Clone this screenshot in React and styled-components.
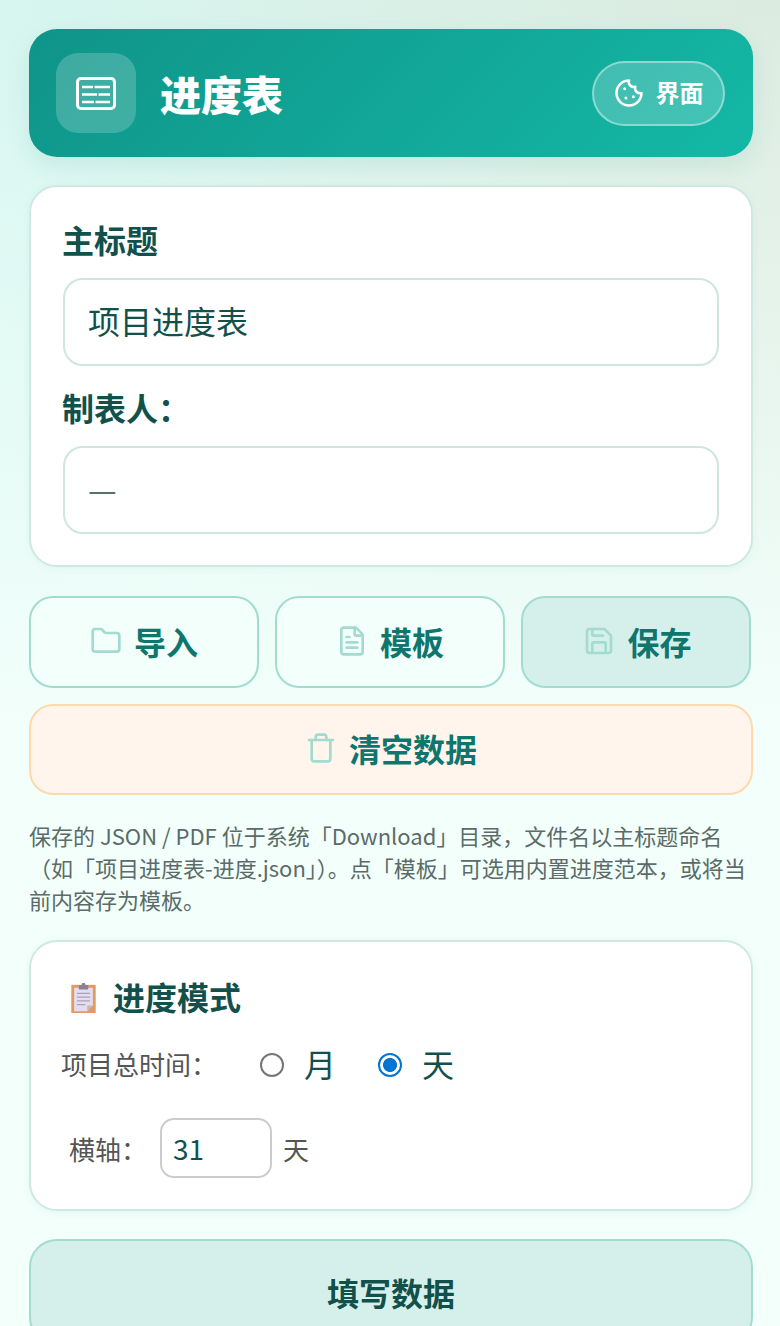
import styled, { createGlobalStyle } from "styled-components";
import { Folder, FileText, Save, Trash } from "lucide-react";

const GlobalStyle = createGlobalStyle`
  html, body {
    margin: 0;
    height: 1326px;
    overflow: hidden;
  }
  body {
    font-family: "Noto Sans CJK SC", "Noto Sans", sans-serif;
    color: #12504b;
  }
  * {
    box-sizing: border-box;
  }
`;

const Page = styled.div`
  height: 1326px;
  padding: 29px 27px 0 29px;
  overflow: hidden;
  background: linear-gradient(180deg, rgba(242, 255, 251, 0) 0, #f2fffb 720px),
    linear-gradient(90deg, #d6f6ef, #dcebe0);
`;

const Header = styled.header`
  height: 128px;
  padding: 0 28px 0 27px;
  display: flex;
  align-items: center;
  border-radius: 28px;
  background: linear-gradient(135deg, #0f9488 0%, #14b8a6 100%);
  box-shadow: 0 8px 24px rgba(15, 148, 136, 0.12);
`;

const LogoBox = styled.div`
  width: 80px;
  height: 80px;
  margin-right: 24px;
  display: flex;
  align-items: center;
  justify-content: center;
  border-radius: 22px;
  background: rgba(255, 255, 255, 0.2);
`;

const HeaderTitle = styled.h1`
  flex: 1;
  margin: 0;
  font-size: 41px;
  line-height: 48px;
  font-weight: 900;
  color: #fff;
`;

const ThemeButton = styled.button`
  width: 133px;
  height: 65px;
  padding: 0;
  display: flex;
  align-items: center;
  justify-content: center;
  gap: 12px;
  border: 2px solid rgba(255, 255, 255, 0.4);
  border-radius: 33px;
  background: rgba(255, 255, 255, 0.2);
  color: #fff;
  font: 700 24px "Noto Sans CJK SC", sans-serif;
`;

const ThemeLabel = styled.span`
  margin-bottom: 4px;
`;

const Card = styled.section`
  margin-top: 28px;
  padding: 29px 32px 31px;
  border: 2px solid #cfe9e2;
  border-radius: 28px;
  background: #fff;
  box-shadow: 0 2px 8px rgba(15, 148, 136, 0.06);
`;

const FieldLabel = styled.label`
  display: block;
  margin: 0 0 16px -1px;
  font-size: 32px;
  line-height: 46px;
  font-weight: 700;
  color: #12504b;
`;

const TextInput = styled.input`
  display: block;
  width: 100%;
  height: 88px;
  margin-bottom: 18px;
  padding: 0 23px 4px;
  border: 2px solid #cfe6e0;
  border-radius: 20px;
  background: #fff;
  color: #12504b;
  font: 400 32px "Noto Sans CJK SC", sans-serif;
  outline: none;

  &:last-child {
    margin-bottom: 0;
  }

  &::placeholder {
    color: #5c6f6b;
    opacity: 1;
  }
`;

const ActionRow = styled.div`
  margin-top: 29px;
  display: grid;
  grid-template-columns: repeat(3, 230px);
  gap: 16px;
`;

const ActionButton = styled.button`
  height: 92px;
  padding: 0 0 3px ${(p) => (p.$filled ? "3px" : "0")};
  display: flex;
  align-items: center;
  justify-content: center;
  gap: 12px;
  border: 2px solid #a3dccf;
  border-radius: 24px;
  background: ${(p) => (p.$filled ? "#d5f0ea" : "#f2fffb")};
  color: #0f766e;
  font: 700 32px "Noto Sans CJK SC", sans-serif;

  svg {
    color: #a3dccf;
  }
`;

const ClearButton = styled(ActionButton)`
  width: 100%;
  height: 91px;
  margin-top: 16px;
  border-color: #fdd9ac;
  background: #fff5ec;
`;

const Note = styled.p`
  margin: 24px 0 0;
  font-size: 22px;
  line-height: 32px;
  color: #5a6b68;
`;

const ModeCard = styled(Card)`
  margin-top: 25px;
  height: 271px;
  padding: 0 30px;
`;

const ModeTitle = styled.h2`
  margin: 0;
  padding-top: 28px;
  height: 95px;
  display: flex;
  align-items: flex-start;
  gap: 17px;
  font-size: 32px;
  line-height: 52px;
  font-weight: 700;
  color: #12504b;

  svg {
    margin: 13px 0 0 10px;
  }
`;

const RadioRow = styled.div`
  height: 52px;
  display: flex;
  align-items: center;
  font-size: 26px;
  color: #555;
`;

const RowLabel = styled.span`
  width: 199px;
  flex: none;
`;

const RadioOption = styled.label`
  margin-right: 42px;
  display: flex;
  align-items: center;
  gap: 20px;
  font-size: 32px;
  color: #12504b;
`;

const RadioInput = styled.input`
  appearance: none;
  width: 24px;
  height: 24px;
  margin: 4px 0 0;
  border: 2px solid #767676;
  border-radius: 50%;
  background: #fff;

  &:checked {
    border-color: #0075d4;
    background: radial-gradient(circle, #0075d4 0, #0075d4 6.6px, #fff 7.4px);
  }
`;

const AxisRow = styled.div`
  margin-top: 29px;
  padding-left: 8px;
  display: flex;
  align-items: center;
  font-size: 26px;
  color: #555;
`;

const AxisLabel = styled.span`
  width: 91px;
  flex: none;
  font-size: 26px;
`;

const AxisInput = styled.input`
  width: 112px;
  height: 60px;
  margin-right: 11px;
  padding: 0 11px;
  border: 2px solid #ccc;
  border-radius: 14px;
  color: #12504b;
  font: 400 28px "Noto Sans CJK SC", sans-serif;
  outline: none;
`;

const FillButton = styled.button`
  display: block;
  width: 100%;
  height: 106px;
  margin-top: 28px;
  padding: 0;
  border: 2px solid #a3dccf;
  border-radius: 28px;
  background: #d5f0ea;
  color: #12504b;
  font: 700 32px "Noto Sans CJK SC", sans-serif;
`;

const GanttIcon = () => (
  <svg width="40" height="33" viewBox="0 0 40 33" fill="none" stroke="#fff">
    <rect x="1.5" y="1.5" width="37" height="30" rx="3.5" strokeWidth="3" />
    <path d="M6 10h11M18.5 10h15.5M6 17.5h15M22.5 17.5h11.5M6 25h12M19.5 25h14.5" strokeWidth="2.6" />
  </svg>
);

const CookieIcon = () => (
  <svg width="30" height="30" viewBox="0 0 24 24" fill="none" stroke="#fff" strokeWidth="2" strokeLinecap="round" strokeLinejoin="round">
    <path d="M12 2a10 10 0 1 0 10 10 4 4 0 0 1-5-5 4 4 0 0 1-5-5" />
    <path d="M8.5 8.5v.01M15.5 15v.01M9.5 16v.01" strokeWidth="2.4" />
  </svg>
);

const ClipboardIcon = () => (
  <svg width="25" height="30" viewBox="0 0 26 32">
    <rect y="2" width="26" height="30" fill="#e29a63" />
    <path d="M3 5h20v19l-6 6H3z" fill="#e4dcef" />
    <path d="M23 24l-6 6v-6z" fill="#c9b8a4" />
    <rect x="8" y="2" width="10" height="5" rx="1" fill="#8a8290" />
    <rect x="11" y="0" width="4" height="4" rx="1.5" fill="#8a8290" />
    <path d="M6 11h14M6 15h14M6 19h14M6 23h9" stroke="#a9a1b8" strokeWidth="1.2" />
  </svg>
);

export default function App() {
  return (
    <Page>
      <GlobalStyle />
      <Header>
        <LogoBox>
          <GanttIcon />
        </LogoBox>
        <HeaderTitle>进度表</HeaderTitle>
        <ThemeButton>
          <CookieIcon />
          <ThemeLabel>界面</ThemeLabel>
        </ThemeButton>
      </Header>

      <Card>
        <FieldLabel>主标题</FieldLabel>
        <TextInput defaultValue="项目进度表" />
        <FieldLabel>制表人：</FieldLabel>
        <TextInput placeholder="—" />
      </Card>

      <ActionRow>
        <ActionButton>
          <Folder size={32} />
          导入
        </ActionButton>
        <ActionButton>
          <FileText size={32} />
          模板
        </ActionButton>
        <ActionButton $filled>
          <Save size={32} />
          保存
        </ActionButton>
      </ActionRow>
      <ClearButton>
        <Trash size={32} />
        清空数据
      </ClearButton>

      <Note>
        保存的 JSON / PDF 位于系统「Download」目录，文件名以主标题命名（如「项目进度表-进度.json」）。点「模板」可选用内置进度范本，或将当前内容存为模板。
      </Note>

      <ModeCard>
        <ModeTitle>
          <ClipboardIcon />
          进度模式
        </ModeTitle>
        <RadioRow>
          <RowLabel>项目总时间：</RowLabel>
          <RadioOption>
            <RadioInput type="radio" name="mode" />月
          </RadioOption>
          <RadioOption>
            <RadioInput type="radio" name="mode" defaultChecked />天
          </RadioOption>
        </RadioRow>
        <AxisRow>
          <AxisLabel>横轴：</AxisLabel>
          <AxisInput defaultValue="31" />天
        </AxisRow>
      </ModeCard>

      <FillButton>填写数据</FillButton>
    </Page>
  );
}
